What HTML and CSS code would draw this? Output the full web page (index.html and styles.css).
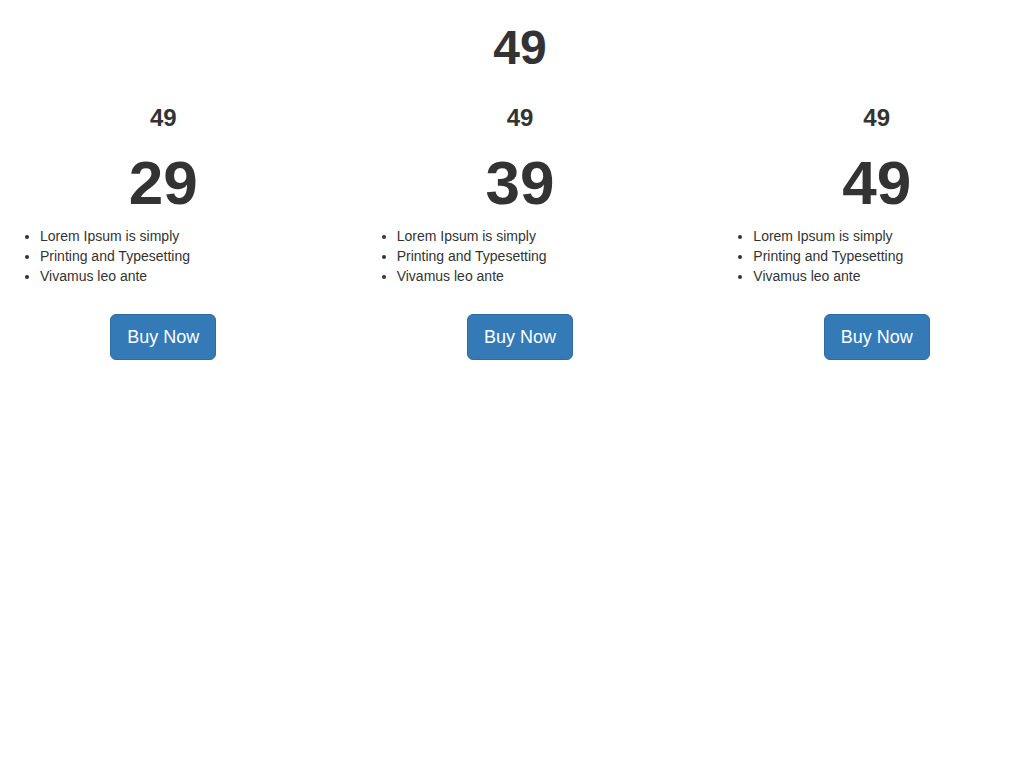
FILE: index.html
```html
<!DOCTYPE html>
<html>
<head>
<meta charset="utf-8">
<title>Pricing</title>
<link rel="stylesheet" href="styles.css">
</head>
<body>
<div class="page">
  <h1 class="title">49</h1>
  <div class="plans">
    <div class="plan">
      <h3 class="plan-name">49</h3>
      <h1 class="plan-price">29</h1>
      <ul class="features">
        <li>Lorem Ipsum is simply</li>
        <li>Printing and Typesetting</li>
        <li>Vivamus leo ante</li>
      </ul>
      <div class="actions"><a class="btn" href="#">Buy Now</a></div>
    </div>
    <div class="plan">
      <h3 class="plan-name">49</h3>
      <h1 class="plan-price">39</h1>
      <ul class="features">
        <li>Lorem Ipsum is simply</li>
        <li>Printing and Typesetting</li>
        <li>Vivamus leo ante</li>
      </ul>
      <div class="actions"><a class="btn" href="#">Buy Now</a></div>
    </div>
    <div class="plan">
      <h3 class="plan-name">49</h3>
      <h1 class="plan-price">49</h1>
      <ul class="features">
        <li>Lorem Ipsum is simply</li>
        <li>Printing and Typesetting</li>
        <li>Vivamus leo ante</li>
      </ul>
      <div class="actions"><a class="btn" href="#">Buy Now</a></div>
    </div>
  </div>
</div>
</body>
</html>
```
FILE: styles.css
```css
html {
  overflow-x: hidden;
}
body {
  margin: 0;
  font-family: "Liberation Sans", Arial, Helvetica, sans-serif;
  font-size: 14px;
  line-height: 1.428571;
  color: #333;
  background: #fff;
}
.page {
  width: 1070px;
  margin-left: -15px;
}
.title {
  margin: 22px 0 8px;
  font-size: 48px;
  line-height: 1.1;
  font-weight: bold;
  text-align: center;
}
.plans {
  display: flex;
}
.plan {
  flex: 1 1 0;
  padding: 0 15px;
  min-width: 0;
}
.plan-name {
  margin: 22px 0 10px;
  font-size: 24px;
  line-height: 1.1;
  font-weight: bold;
  text-align: center;
}
.plan-price {
  margin: 18px 0 10px;
  font-size: 62px;
  line-height: 1.1;
  font-weight: bold;
  text-align: center;
}
.features {
  margin: 0 0 10px;
  padding-left: 40px;
}
.actions {
  margin-top: 27px;
  text-align: center;
}
.btn {
  display: inline-block;
  padding: 10px 16px;
  font-size: 18px;
  line-height: 1.3333333;
  color: #fff;
  background-color: #337ab7;
  border: 1px solid #2e6da4;
  border-radius: 6px;
  text-decoration: none;
}
```
